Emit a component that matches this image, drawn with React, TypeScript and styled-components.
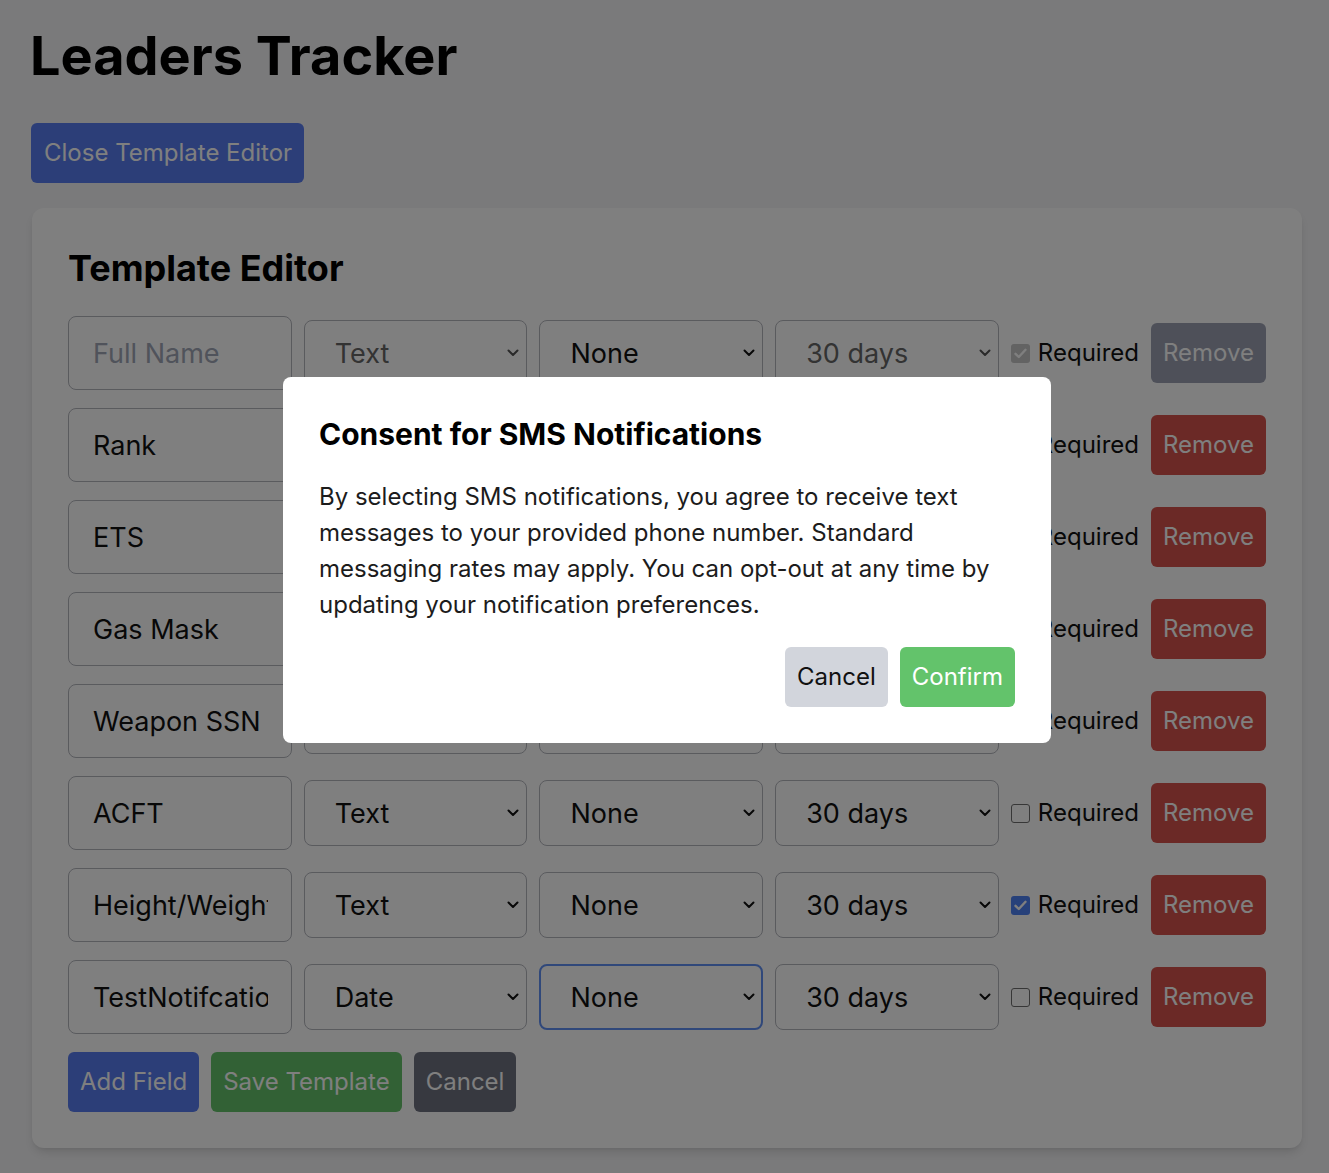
import React from "react";
import styled, { createGlobalStyle, css } from "styled-components";

const GlobalStyle = createGlobalStyle`
  html, body {
    margin: 0;
    padding: 0;
    background: #f4f4f6;
  }
  body {
    font-family: Inter, "Noto Sans", "Liberation Sans", sans-serif;
    color: #111;
    overflow: hidden;
  }
  *, *::before, *::after { box-sizing: border-box; }
`;

type Tone = "blue" | "green" | "dark" | "red" | "muted" | "light" | "confirm";

const toneColors: Record<Tone, { bg: string; fg: string }> = {
  blue: { bg: "#587cf0", fg: "#ffffff" },
  green: { bg: "#64c36b", fg: "#ffffff" },
  dark: { bg: "#6e7280", fg: "#ffffff" },
  red: { bg: "#d6534c", fg: "#ffffff" },
  muted: { bg: "#9ca1b3", fg: "#ffffff" },
  light: { bg: "#d2d5dc", fg: "#111111" },
  confirm: { bg: "#63c36b", fg: "#ffffff" },
};

const Page = styled.div`
  min-height: 100vh;
  padding: 26px 27px 24px 32px;
  background: #f4f4f6;
`;

const PageTitle = styled.h1`
  margin: 0 0 37px -2px;
  font-size: 54px;
  line-height: 60px;
  font-weight: 700;
  color: #000;
`;

const Button = styled.button<{ $tone: Tone; $wide?: boolean }>`
  flex: none;
  height: 60px;
  padding: 0 12px;
  border: none;
  border-radius: 6px;
  font-family: inherit;
  font-size: 24px;
  line-height: 36px;
  font-weight: 400;
  cursor: pointer;
  background: ${(p) => toneColors[p.$tone].bg};
  color: ${(p) => toneColors[p.$tone].fg};
  ${(p) =>
    p.$wide &&
    css`
      margin-left: -1px;
      padding: 0 12px 0 13px;
    `}
`;

const Card = styled.section`
  margin-top: 25px;
  background: #fff;
  border-radius: 12px;
  padding: 36px;
  box-shadow: 0 6px 10px -2px rgba(0, 0, 0, 0.12), 0 2px 4px -2px rgba(0, 0, 0, 0.08);
`;

const CardTitle = styled.h2`
  margin: 0 0 24px;
  font-size: 36px;
  line-height: 48px;
  font-weight: 700;
  color: #000;
`;

const FieldRow = styled.div`
  display: grid;
  grid-template-columns: repeat(4, minmax(0, 1fr)) auto auto;
  align-items: center;
  column-gap: 12px;
  height: 74px;
  margin-bottom: 18px;
`;

const NameInput = styled.input`
  width: 100%;
  min-width: 0;
  height: 74px;
  padding: 0 23px 0 24px;
  border: 1px solid #b4b6bd;
  border-radius: 8px;
  background: #fff;
  font-family: inherit;
  font-size: 27px;
  color: #111;
  outline: none;
  &::placeholder {
    color: #a0a6b6;
  }
`;

const SelectWrap = styled.div`
  min-width: 0;
  position: relative;
  display: flex;
`;

const Select = styled.select<{ $focused?: boolean; $dim?: boolean }>`
  appearance: none;
  -webkit-appearance: none;
  width: 100%;
  height: 66px;
  padding: 0 40px 0 30px;
  border: 1px solid #b4b6bd;
  border-radius: 8px;
  background: #fff;
  font-family: inherit;
  font-size: 27px;
  color: ${(p) => (p.$dim ? "#666" : "#111")};
  outline: none;
  ${(p) =>
    p.$focused &&
    css`
      border: 2px solid #6090f5;
      padding-left: 29px;
    `}
`;

const Chevron = styled.svg<{ $dim?: boolean }>`
  position: absolute;
  right: 8px;
  top: 50%;
  margin-top: -4px;
  width: 12px;
  height: 8px;
  color: ${(p) => (p.$dim ? "#555" : "#111")};
  pointer-events: none;
`;

const CheckLabel = styled.label`
  display: flex;
  align-items: center;
  gap: 8px;
  font-size: 24px;
  line-height: 36px;
  color: #111;
`;

const CheckBox = styled.span<{ $checked: boolean; $disabled?: boolean }>`
  width: 19px;
  height: 19px;
  border-radius: 3px;
  display: flex;
  align-items: center;
  justify-content: center;
  border: 1px solid #6e6e6e;
  background: #fff;
  ${(p) =>
    p.$checked &&
    css`
      border: none;
      background: ${p.$disabled ? "#c6c6c6" : "#4f82f5"};
    `}
`;

const Actions = styled.div`
  display: flex;
  gap: 12px;
`;

const Overlay = styled.div`
  position: fixed;
  inset: 0;
  background: rgba(0, 0, 0, 0.5);
  display: flex;
  align-items: center;
  justify-content: center;
  padding: 0 0 53px 5px;
`;

const Modal = styled.div`
  width: 768px;
  background: #fff;
  border-radius: 8px;
  padding: 36px;
`;

const ModalTitle = styled.h3`
  margin: 0 0 24px;
  font-size: 30px;
  line-height: 42px;
  font-weight: 700;
  color: #000;
`;

const ModalText = styled.p`
  margin: 0;
  font-size: 24px;
  line-height: 36px;
  color: #1c1c1c;
`;

const ModalActions = styled.div`
  display: flex;
  justify-content: flex-end;
  gap: 12px;
  margin-top: 24px;
`;

type Field = {
  name: string;
  placeholder?: boolean;
  type: string;
  notify: string;
  period: string;
  required: boolean;
  locked?: boolean;
  focused?: boolean;
};

const fields: Field[] = [
  { name: "Full Name", placeholder: true, type: "Text", notify: "None", period: "30 days", required: true, locked: true },
  { name: "Rank", type: "Text", notify: "None", period: "30 days", required: false },
  { name: "ETS", type: "Date", notify: "None", period: "30 days", required: false },
  { name: "Gas Mask", type: "Date", notify: "None", period: "30 days", required: false },
  { name: "Weapon SSN", type: "Text", notify: "None", period: "30 days", required: false },
  { name: "ACFT", type: "Text", notify: "None", period: "30 days", required: false },
  { name: "Height/Weight", type: "Text", notify: "None", period: "30 days", required: true },
  { name: "TestNotifcation", type: "Date", notify: "None", period: "30 days", required: false, focused: true },
];

const SelectBox: React.FC<{ value: string; options: string[]; dim?: boolean; focused?: boolean }> = ({
  value,
  options,
  dim,
  focused,
}) => (
  <SelectWrap>
    <Select defaultValue={value} $dim={dim} $focused={focused}>
      {options.map((o) => (
        <option key={o} value={o}>
          {o}
        </option>
      ))}
    </Select>
    <Chevron $dim={dim} viewBox="0 0 12 8" fill="none">
      <path d="M1.5 1.5 L6 6 L10.5 1.5" stroke="currentColor" strokeWidth="2" strokeLinecap="round" strokeLinejoin="round" />
    </Chevron>
  </SelectWrap>
);

const FieldEditorRow: React.FC<{ field: Field }> = ({ field }) => (
  <FieldRow>
    {field.placeholder ? (
      <NameInput placeholder={field.name} readOnly />
    ) : (
      <NameInput defaultValue={field.name} />
    )}
    <SelectBox value={field.type} options={["Text", "Date", "Number"]} dim={field.locked} />
    <SelectBox value={field.notify} options={["None", "Email", "SMS"]} focused={field.focused} />
    <SelectBox value={field.period} options={["30 days", "60 days", "90 days"]} dim={field.locked} />
    <CheckLabel>
      <CheckBox $checked={field.required} $disabled={field.locked}>
        {field.required && (
          <svg width="13" height="11" viewBox="0 0 13 11" fill="none">
            <path d="M1.5 5.8 L4.8 9 L11.5 1.8" stroke="#fff" strokeWidth="2.4" strokeLinecap="round" strokeLinejoin="round" />
          </svg>
        )}
      </CheckBox>
      Required
    </CheckLabel>
    <Button $tone={field.locked ? "muted" : "red"}>Remove</Button>
  </FieldRow>
);

export default function App() {
  return (
    <>
      <GlobalStyle />
      <Page>
        <PageTitle>Leaders Tracker</PageTitle>
        <Button $tone="blue" $wide>
          Close Template Editor
        </Button>
        <Card>
          <CardTitle>Template Editor</CardTitle>
          {fields.map((f) => (
            <FieldEditorRow key={f.name} field={f} />
          ))}
          <Actions>
            <Button $tone="blue">Add Field</Button>
            <Button $tone="green">Save Template</Button>
            <Button $tone="dark">Cancel</Button>
          </Actions>
        </Card>
      </Page>
      <Overlay>
        <Modal>
          <ModalTitle>Consent for SMS Notifications</ModalTitle>
          <ModalText>
            By selecting SMS notifications, you agree to receive text messages to your provided phone number. Standard
            messaging rates may apply. You can opt-out at any time by updating your notification preferences.
          </ModalText>
          <ModalActions>
            <Button $tone="light">Cancel</Button>
            <Button $tone="confirm">Confirm</Button>
          </ModalActions>
        </Modal>
      </Overlay>
    </>
  );
}
